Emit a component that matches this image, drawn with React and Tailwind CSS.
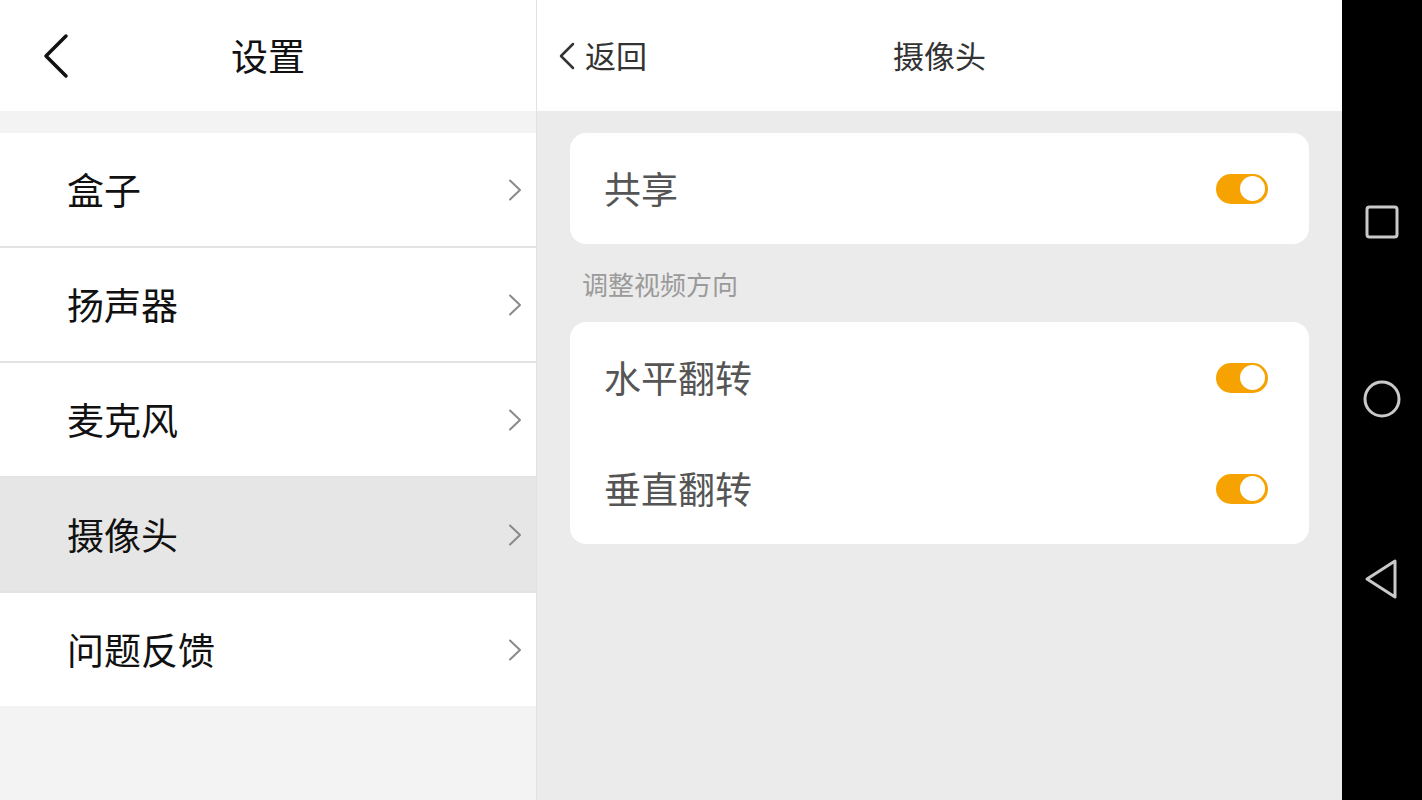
import { useState } from "react";

const font = { fontFamily: '"Noto Sans CJK SC", "Noto Sans", sans-serif' };

const menu = ["盒子", "扬声器", "麦克风", "摄像头", "问题反馈"];

function Chevron({ className }) {
  return (
    <svg className={className} viewBox="0 0 14 22" fill="none" stroke="currentColor" strokeWidth="2" strokeLinecap="round" strokeLinejoin="round">
      <path d="M2 1.5l10 9.5-10 9.5" />
    </svg>
  );
}

function Toggle({ on, onClick }) {
  return (
    <button
      onClick={onClick}
      className={`w-[52px] h-[30px] rounded-full flex items-center px-[3px] ${on ? "bg-[#f6a200] justify-end" : "bg-[#cfcfcf] justify-start"}`}
    >
      <span className="w-[25px] h-[25px] rounded-full bg-white" />
    </button>
  );
}

function SwitchRow({ label, on, onClick }) {
  return (
    <div className="h-[111px] flex items-center justify-between pl-[34px] pr-[41px]">
      <span className="text-[37px] text-[#555]">{label}</span>
      <Toggle on={on} onClick={onClick} />
    </div>
  );
}

export default function App() {
  const [active, setActive] = useState(3);
  const [share, setShare] = useState(true);
  const [hFlip, setHFlip] = useState(true);
  const [vFlip, setVFlip] = useState(true);

  return (
    <div className="flex w-[1422px] h-[800px] overflow-hidden" style={font}>
      {/* settings list */}
      <div className="w-[537px] flex flex-col bg-[#f3f3f3] border-r border-[#e2e2e2]">
        <div className="h-[111px] bg-white flex items-center relative">
          <svg className="absolute left-[41px] top-[33px] w-[30px] h-[46px] text-[#111]" viewBox="0 0 30 46" fill="none" stroke="currentColor" strokeWidth="3.5" strokeLinecap="round" strokeLinejoin="round">
            <path d="M25 3L5 23l20 20" />
          </svg>
          <span className="w-full text-center text-[37px] text-[#111]">设置</span>
        </div>
        <div className="mt-[22px] flex flex-col">
          {menu.map((m, i) => (
            <button
              key={m}
              onClick={() => setActive(i)}
              className={`flex items-center justify-between pl-[67px] pr-[14px] text-left ${i < menu.length - 1 ? "h-[115px] border-b-2 border-[#e3e3e3]" : "h-[113px]"} ${active === i ? "bg-[#e6e6e6]" : "bg-white"}`}
            >
              <span className="text-[37px] text-[#111]">{m}</span>
              <Chevron className="w-[14px] h-[22px] text-[#8a8a8a]" />
            </button>
          ))}
        </div>
      </div>

      {/* camera detail */}
      <div className="flex-1 flex flex-col bg-[#ebebeb]">
        <div className="h-[111px] bg-white flex items-center relative">
          <div className="absolute left-[21px] top-0 h-full flex items-center gap-[9px] text-[#333]">
            <svg className="w-[18px] h-[28px]" viewBox="0 0 18 28" fill="none" stroke="currentColor" strokeWidth="2.5" strokeLinecap="round" strokeLinejoin="round">
              <path d="M15 2L3 14l12 12" />
            </svg>
            <span className="text-[31px]">返回</span>
          </div>
          <span className="w-full text-center text-[31px] text-[#333]">摄像头</span>
        </div>
        <div className="px-[33px] pt-[22px] flex flex-col">
          <div className="bg-white rounded-[16px]">
            <SwitchRow label="共享" on={share} onClick={() => setShare(!share)} />
          </div>
          <div className="h-[78px] flex items-center pl-[12px] text-[26px] text-[#9a9a9a]">调整视频方向</div>
          <div className="bg-white rounded-[16px]">
            <SwitchRow label="水平翻转" on={hFlip} onClick={() => setHFlip(!hFlip)} />
            <SwitchRow label="垂直翻转" on={vFlip} onClick={() => setVFlip(!vFlip)} />
          </div>
        </div>
      </div>

      {/* system nav bar */}
      <div className="w-[80px] bg-black flex flex-col items-center justify-between py-[204px] pb-[200px] text-[#c9c9c9]">
        <svg className="w-[36px] h-[36px]" viewBox="0 0 36 36" fill="none" stroke="currentColor" strokeWidth="3">
          <rect x="3" y="3" width="30" height="30" rx="2.5" />
        </svg>
        <svg className="w-[40px] h-[40px]" viewBox="0 0 40 40" fill="none" stroke="currentColor" strokeWidth="3">
          <circle cx="20" cy="20" r="17" />
        </svg>
        <svg className="w-[36px] h-[42px]" viewBox="0 0 36 42" fill="none" stroke="currentColor" strokeWidth="3" strokeLinejoin="round">
          <path d="M31 3v36L3 21z" />
        </svg>
      </div>
    </div>
  );
}
